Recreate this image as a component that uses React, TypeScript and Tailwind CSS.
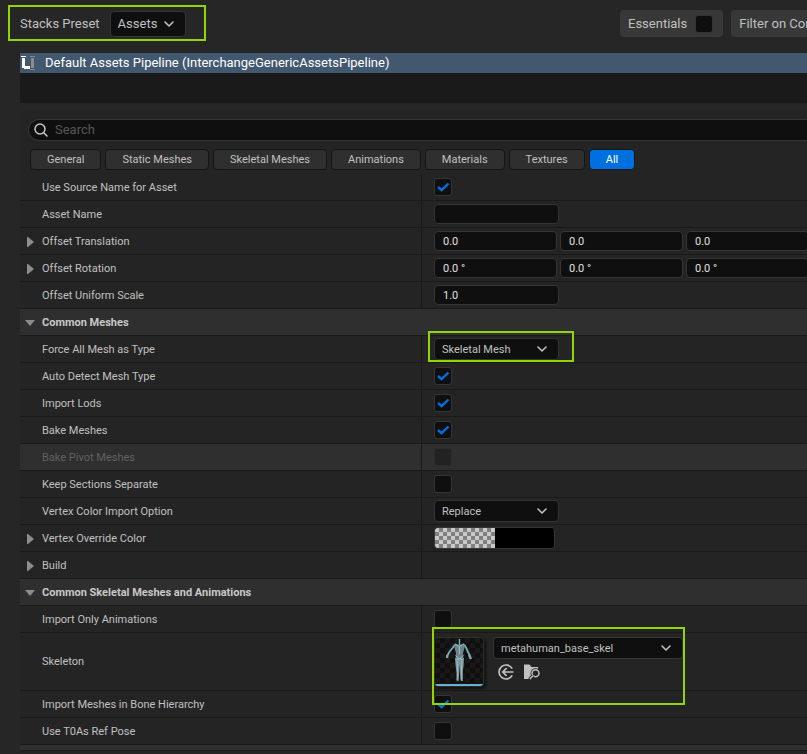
import { ReactNode } from 'react'
import clsx from 'clsx'

const FILTERS = ['General', 'Static Meshes', 'Skeletal Meshes', 'Animations', 'Materials', 'Textures', 'All']

function Chevron({ className }: { className?: string }) {
  return (
    <svg viewBox="0 0 10 6" className={clsx('pointer-events-none h-[6px] w-[10px]', className)} fill="none" stroke="#c0c0c0" strokeWidth="1.6" strokeLinecap="round" strokeLinejoin="round">
      <path d="M1 1l4 4 4-4" />
    </svg>
  )
}

function Select({ id, value, className, label }: { id: string; value: string; className?: string; label?: string }) {
  return (
    <div className={clsx('relative flex h-[22px] items-center', className)}>
      <select id={id} aria-label={label} defaultValue={value} className="h-full w-full appearance-none rounded border border-[#353535] bg-[#0f0f0f] pl-[7px] pr-6 pt-px text-[#c0c0c0] outline-none">
        <option>{value}</option>
      </select>
      <Chevron className="absolute right-3" />
    </div>
  )
}

function Check({ id, checked, disabled }: { id: string; checked?: boolean; disabled?: boolean }) {
  return (
    <span className="relative flex size-[18px] shrink-0">
      <input
        id={id}
        type="checkbox"
        defaultChecked={checked}
        disabled={disabled}
        className="peer size-full appearance-none rounded-[3px] border border-[#353535] bg-[#0f0f0f] disabled:border-[#2c2c2c] disabled:bg-[#222222]"
      />
      <svg viewBox="0 0 18 18" className="pointer-events-none absolute inset-0 hidden peer-checked:block" fill="none" stroke="#0070e0" strokeWidth="2.4">
        <path d="M4 9l3.6 3.200L14.500 5.500" />
      </svg>
    </span>
  )
}

const FIELD = 'h-5 shrink-0 rounded border border-[#353535] bg-[#0f0f0f] px-2 text-[#e0e0e0] outline-none'

function Field({ id, value }: { id: string; value: string }) {
  return <input id={id} defaultValue={value} className={clsx(FIELD, 'w-[125px]')} />
}

function Vector({ id, value, name }: { id: string; value: string; name: string }) {
  return (
    <div className="flex gap-[3px]">
      {['X', 'Y', 'Z'].map((axis, i) => (
        <input key={axis} id={i === 0 ? id : undefined} aria-label={`${name} ${axis}`} defaultValue={value} className={clsx(FIELD, 'w-[123px]')} />
      ))}
    </div>
  )
}

function Row({ label, id, expandable, disabled, tall, children }: {
  label: string
  id: string
  expandable?: boolean
  disabled?: boolean
  tall?: boolean
  children?: ReactNode
}) {
  return (
    <div className={clsx('flex border-b border-[#1a1a1a]', tall ? 'h-[58px]' : 'h-[27px]', disabled && 'bg-[#2f2f2f]')}>
      <div className={clsx('flex w-[402px] shrink-0 items-center border-r border-[#1a1a1a]', !tall && 'pt-[2px]')}>
        <span className="flex w-[22px] shrink-0 justify-center pr-[2px]">
          {expandable && (
            <button type="button" aria-label={`Expand ${label}`}>
              <svg viewBox="0 0 7 10" className="h-[10px] w-[7px]" fill="#8c8c8c"><path d="M0 0h1l6 5-6 5H0z" /></svg>
            </button>
          )}
        </span>
        <label htmlFor={id} className={disabled ? 'text-[#606060]' : undefined}>{label}</label>
      </div>
      <div className={clsx('flex min-w-0 flex-1 items-center pl-3', tall && 'pt-px')}>{children}</div>
    </div>
  )
}

function Category({ label }: { label: string }) {
  return (
    <button type="button" className="flex h-[27px] w-full items-center border-b border-[#1a1a1a] bg-[#2f2f2f] pt-[2px] font-bold text-[#c8c8c8]">
      <span className="flex w-[22px] justify-center pr-[2px]">
        <svg viewBox="0 0 10 6" className="h-[6px] w-[10px]" fill="#8c8c8c"><path d="M0 0h10l-5 6z" /></svg>
      </span>
      {label}
    </button>
  )
}

function SkeletonThumb() {
  return (
    <div className="size-[50px] shrink-0 overflow-hidden rounded border border-[#303030] bg-[#0f0f0f] shadow-[2px_2px_3px_#0008]">
      <svg viewBox="0 0 48 48" className="size-full">
        <defs>
          <pattern id="thumb-grid" width="10" height="10" patternUnits="userSpaceOnUse">
            <path d="M0 0h5v5H0zM5 5h5v5H5z" fill="#1a1717" />
          </pattern>
        </defs>
        <rect width="48" height="48" fill="url(#thumb-grid)" />
        <g fill="none" stroke="#78aeb8">
          <path d="M24.500 1v6" strokeWidth="1.400" />
          <path d="M20 6.500L18 9.500 15 13 12 18" strokeWidth="1.800" />
          <path d="M29 6.500L31 9.500 33 14 35 18" strokeWidth="1.800" />
          <path d="M12.500 17l-.5 3M34 17l2 4" strokeWidth="2.400" />
        </g>
        <path d="M20 5.500l4.500 1.500 4.500-1.500.5 4-1.500 6 .5 5.500h-8l.5-5.500-1.500-6z" fill="#6e8388" />
        <path d="M20 20h9l-.5 8-.7 6v8.500h-2.300l-.5-8.500-.2-8-.6 8-.5 8h-2.200V34l-.9-6z" fill="#82959a" />
        <g fill="none" stroke="#8fc5cf" strokeWidth=".9">
          <path d="M20 6l4.500 2.500L29 6M24.500 8v8M20.500 17.500l4 3.500 4-3.500M21 22l3.500-1.500L28 22" />
          <path d="M22 23l.6 9v9M27 23l-.5 9 .3 9M21.500 42l2 .7M26 42l1.700.7" />
        </g>
        <rect y="46" width="48" height="2" fill="#68b0d2" />
      </svg>
    </div>
  )
}

function SkeletonPicker() {
  return (
    <div className="relative flex gap-[9px]">
      <SkeletonThumb />
      <div className="flex flex-col gap-[5px]">
        <Select id="skeleton" value="metahuman_base_skel" className="w-[190px]" />
        <div className="flex gap-[10px] pl-[5px]">
          <button type="button" aria-label="Use selected asset">
            <svg viewBox="0 0 16 16" className="size-4" fill="none" stroke="#c0c0c0" strokeWidth="1.700">
              <path d="M14.200 4.700A7 7 0 1 0 14.200 11.300" />
              <path d="M15.500 8H5M8.600 4.200L4.800 8l3.800 3.800" />
            </svg>
          </button>
          <button type="button" aria-label="Browse to asset">
            <svg viewBox="0 0 17 16" className="h-4 w-[17px]">
              <path d="M0 .5h5.500L7.500 3H14v3H0zM0 5h14v3H8v7H0z" fill="#c0c0c0" />
              <circle cx="11.500" cy="9.200" r="5" fill="#242424" />
              <circle cx="11.500" cy="9.200" r="3.500" fill="none" stroke="#c0c0c0" strokeWidth="1.500" />
              <path d="M9 11.700L5.500 15.500" stroke="#242424" strokeWidth="3.500" />
              <path d="M9 11.700L5.800 15" stroke="#c0c0c0" strokeWidth="1.600" />
            </svg>
          </button>
        </div>
      </div>
      <Highlight className="-inset-x-[2px] -top-[10px] h-[78px]" />
    </div>
  )
}

// Green callout frame, sits over whatever it surrounds
function Highlight({ className }: { className: string }) {
  return <div className={clsx('pointer-events-none absolute z-10 border-2 border-[#93d500]', className)} />
}

export default function App() {
  return (
    <div className="flex min-h-screen flex-col overflow-hidden bg-[#262626] pl-5 font-[Roboto,sans-serif] text-[11px] leading-4 text-[#c0c0c0]">
      {/* Toolbar */}
      <header className="flex h-[53px] items-center justify-between pb-[6px] text-[13px]">
        <div className="relative flex shrink-0 items-center gap-[10px]">
          <label htmlFor="preset">Stacks Preset</label>
          <Select id="preset" value="Assets" className="h-[26px] w-[76px]" />
          <Highlight className="-bottom-1 -left-3 -right-5 -top-[6px]" />
        </div>
        <div className="flex w-[187px] shrink-0 gap-2 overflow-hidden whitespace-nowrap">
          <label className="flex h-[27px] shrink-0 items-center gap-2 rounded bg-[#383838] pl-2 pr-[10px]">
            Essentials
            <Check id="essentials" />
          </label>
          <button type="button" className="h-[27px] shrink-0 rounded bg-[#383838] px-2">Filter on Contents</button>
        </div>
      </header>

      {/* Pipeline list */}
      <div className="h-[50px] bg-[#1a1a1a]">
        <div className="flex h-5 items-center gap-[10px] bg-[#42586f] text-[13px] text-white">
          <svg viewBox="0 0 15 15" className="size-[15px]" shapeRendering="crispEdges">
            <path d="M1 0h5v1H1zM2 2h3v8h5v3H4v-1H2z" fill="#fff" />
            <path d="M10 0h5v1h-5zM10 13h5v1h-5zM11 2h3v10h-3z" fill="#8a8a8a" />
          </svg>
          Default Assets Pipeline (InterchangeGenericAssetsPipeline)
        </div>
      </div>

      {/* Details */}
      <main className="mt-2 flex-1 bg-[#242424] pt-2">
        <div className="ml-2 flex h-[22px] items-center gap-[7px] rounded-l-full border border-r-0 border-[#353535] bg-[#0f0f0f] pl-[5px]">
          <svg viewBox="0 0 14 14" className="size-[14px]" fill="none" stroke="#c8c8c8" strokeWidth="1.500" strokeLinecap="round">
            <circle cx="6" cy="6" r="5" />
            <path d="M9.700 9.700L13 13" />
          </svg>
          <input type="search" aria-label="Search" placeholder="Search" className="min-w-0 flex-1 bg-transparent text-[13px] outline-none placeholder:text-[#575757]" />
        </div>

        <div className="mb-1 mt-2 flex gap-1 pl-[10px]">
          {FILTERS.map(name => (
            <button
              key={name}
              type="button"
              className={clsx(
                'h-[21px] rounded border border-[#151515] px-4',
                name === 'All' ? 'bg-[#0070e0] text-white' : 'bg-[#2f2f2f]'
              )}
            >
              {name}
            </button>
          ))}
        </div>

        <Row label="Use Source Name for Asset" id="use-source"><Check id="use-source" checked /></Row>
        <Row label="Asset Name" id="asset-name"><Field id="asset-name" value="" /></Row>
        <Row label="Offset Translation" id="translation" expandable><Vector id="translation" name="Translation" value="0.0" /></Row>
        <Row label="Offset Rotation" id="rotation" expandable><Vector id="rotation" name="Rotation" value="0.0 °" /></Row>
        <Row label="Offset Uniform Scale" id="scale"><Field id="scale" value="1.0" /></Row>

        <Category label="Common Meshes" />
        <Row label="Force All Mesh as Type" id="force-type">
          <div className="relative">
            <Select id="force-type" value="Skeletal Mesh" className="w-[125px]" />
            <Highlight className="-left-[6px] -right-[15px] -top-[7px] h-[31px]" />
          </div>
        </Row>
        <Row label="Auto Detect Mesh Type" id="auto-detect"><Check id="auto-detect" checked /></Row>
        <Row label="Import Lods" id="lods"><Check id="lods" checked /></Row>
        <Row label="Bake Meshes" id="bake"><Check id="bake" checked /></Row>
        <Row label="Bake Pivot Meshes" id="bake-pivot" disabled><Check id="bake-pivot" disabled /></Row>
        <Row label="Keep Sections Separate" id="keep"><Check id="keep" /></Row>
        <Row label="Vertex Color Import Option" id="vertex-option"><Select id="vertex-option" value="Replace" className="w-[125px]" /></Row>
        <Row label="Vertex Override Color" id="vertex-color" expandable>
          <button id="vertex-color" type="button" className="flex h-[22px] w-[121px] overflow-hidden rounded border border-[#353535]">
            <span className="h-full flex-1 bg-[repeating-conic-gradient(#808080_0_25%,#c8c8c8_0_50%)] bg-[length:8px_8px]" />
            <span className="h-full flex-1 bg-black" />
          </button>
        </Row>
        <Row label="Build" id="build" expandable />

        <Category label="Common Skeletal Meshes and Animations" />
        <Row label="Import Only Animations" id="only-anim"><Check id="only-anim" /></Row>
        <Row label="Skeleton" id="skeleton" tall><SkeletonPicker /></Row>
        <Row label="Import Meshes in Bone Hierarchy" id="bone"><Check id="bone" checked /></Row>
        <Row label="Use T0As Ref Pose" id="ref-pose"><Check id="ref-pose" /></Row>
        <div className="h-[6px] border-b border-[#1a1a1a] bg-[#2f2f2f]" />
      </main>
    </div>
  )
}
